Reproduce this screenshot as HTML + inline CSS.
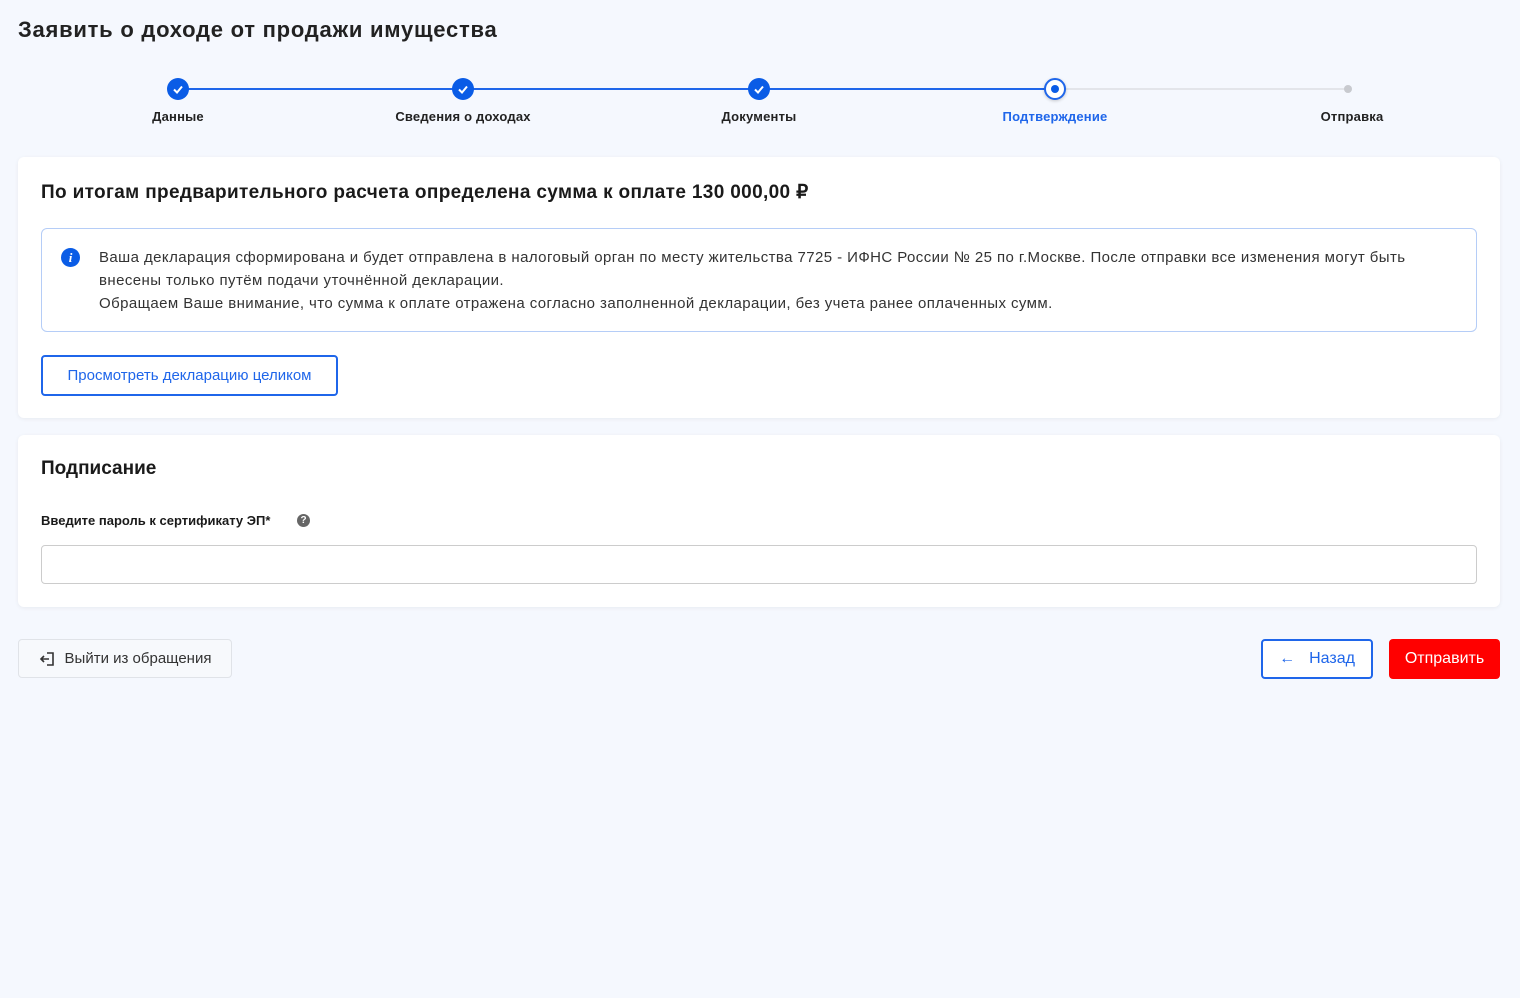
<!DOCTYPE html><html><head><meta charset="utf-8"><style>
*{box-sizing:border-box;margin:0;padding:0}
body{width:1520px;height:998px;background:#f5f8fe;font-family:"Liberation Sans",sans-serif;color:#1a1a1a;position:relative;overflow:hidden}
.a{position:absolute}
h1{position:absolute;left:18px;top:17px;font-size:22px;font-weight:bold;color:#222;letter-spacing:0.75px}
.lbl{position:absolute;top:109px;font-size:13px;font-weight:bold;transform:translateX(-50%);white-space:nowrap;color:#222;letter-spacing:0.2px}
.dot{position:absolute;top:78px;width:22px;height:22px;border-radius:50%;background:#0a5ce6;transform:translateX(-50%)}
.card{position:absolute;left:18px;width:1482px;background:#fff;border-radius:6px;box-shadow:0 1px 4px rgba(0,0,0,.06)}
.btn{position:absolute;border-radius:4px;font-size:15px;display:flex;align-items:center;justify-content:center}
</style></head><body>
<h1>Заявить о доходе от продажи имущества</h1>
<div class="a" style="left:178px;top:88px;width:877px;height:2px;background:#1f66ea"></div>
<div class="a" style="left:1055px;top:88px;width:293px;height:2px;background:#e3e5ea"></div>
<div class="dot" style="left:178px"><svg width="22" height="22"><path d="M7 11.5l3 3 5-6" stroke="#fff" stroke-width="2" fill="none"/></svg></div>
<div class="dot" style="left:463px"><svg width="22" height="22"><path d="M7 11.5l3 3 5-6" stroke="#fff" stroke-width="2" fill="none"/></svg></div>
<div class="dot" style="left:759px"><svg width="22" height="22"><path d="M7 11.5l3 3 5-6" stroke="#fff" stroke-width="2" fill="none"/></svg></div>
<div class="dot" style="left:1055px;background:#fff;border:2px solid #1f66ea;box-shadow:0 1px 3px rgba(0,0,0,.2)"><div style="position:absolute;left:5px;top:5px;width:8px;height:8px;border-radius:50%;background:#0a5ce6"></div></div>
<div class="a" style="left:1344px;top:85px;width:8px;height:8px;border-radius:50%;background:#c8cacf"></div>
<div class="lbl" style="left:178px">Данные</div>
<div class="lbl" style="left:463px">Сведения о доходах</div>
<div class="lbl" style="left:759px">Документы</div>
<div class="lbl" style="left:1055px;color:#1f66ea">Подтверждение</div>
<div class="lbl" style="left:1352px">Отправка</div>

<div class="card" style="top:157px;height:261px">
<div class="a" style="left:23px;top:24px;font-size:19px;font-weight:bold;letter-spacing:0.35px">По итогам предварительного расчета определена сумма к оплате 130 000,00 ₽</div>
<div class="a" style="left:23px;top:71px;width:1436px;height:104px;border:1px solid #b5cdf7;border-radius:6px">
<div class="a" style="left:19px;top:19px;width:19px;height:19px;border-radius:50%;background:#0a5ce6;color:#fff;font-size:13px;font-weight:bold;font-style:italic;text-align:center;line-height:19px;font-family:'Liberation Serif',serif">i</div>
<div class="a" style="left:57px;top:17px;font-size:15px;line-height:23px;color:#333;letter-spacing:0.42px;white-space:nowrap">Ваша декларация сформирована и будет отправлена в налоговый орган по месту жительства 7725 - ИФНС России № 25 по г.Москве. После отправки все изменения могут быть<br>внесены только путём подачи уточнённой декларации.<br>Обращаем Ваше внимание, что сумма к оплате отражена согласно заполненной декларации, без учета ранее оплаченных сумм.</div>
</div>
<div class="btn" style="left:23px;top:198px;width:297px;height:41px;border:2px solid #1f66ea;color:#1f66ea">Просмотреть декларацию целиком</div>
</div>

<div class="card" style="top:435px;height:172px">
<div class="a" style="left:23px;top:23px;font-size:19px;font-weight:bold">Подписание</div>
<div class="a" style="left:23px;top:78px;font-size:13px;font-weight:bold">Введите пароль к сертификату ЭП*</div>
<div class="a" style="left:279px;top:79px;width:13px;height:13px;border-radius:50%;background:#666;color:#fff;font-size:10px;font-weight:bold;text-align:center;line-height:13px">?</div>
<div class="a" style="left:23px;top:110px;width:1436px;height:39px;border:1px solid #ccc;border-radius:4px"></div>
</div>

<div class="btn" style="left:18px;top:639px;width:214px;height:39px;border:1px solid #e0e3e8;background:#f7f9fc;color:#333"><svg width="18" height="18" style="margin-right:8px"><path d="M8 3h6v12H8M2 9h8M5 6l-3 3 3 3" stroke="#333" stroke-width="1.6" fill="none"/></svg>Выйти из обращения</div>
<div class="btn" style="left:1261px;top:639px;width:112px;height:40px;border:2px solid #1f66ea;color:#1f66ea;background:#fff;font-size:16px"><span style="margin-right:14px;font-weight:bold">←</span>Назад</div>
<div class="btn" style="left:1389px;top:639px;width:111px;height:40px;background:#f00;color:#fff;font-size:16px">Отправить</div>
</body></html>
